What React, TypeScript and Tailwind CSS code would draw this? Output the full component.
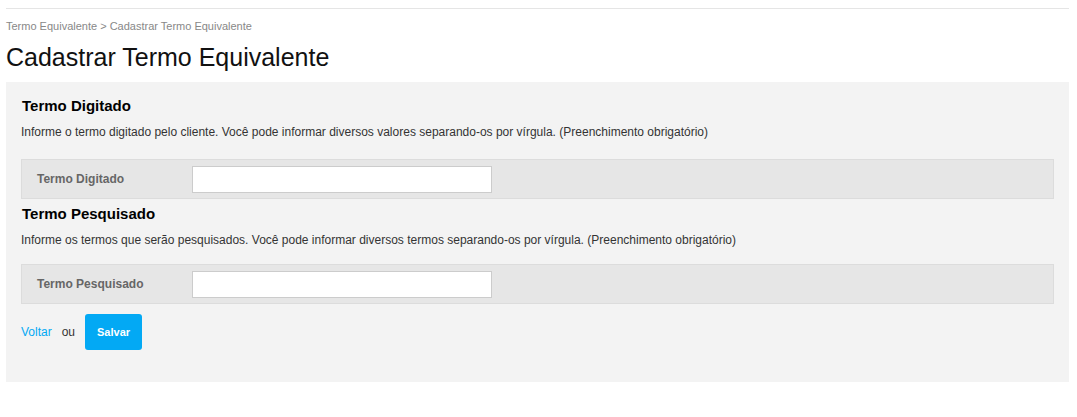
import React from 'react';

function Field({ label }: { label: string }) {
  return (
    <div className="flex items-center h-[40px] bg-[#e6e6e6] border border-[#dcdcdc]">
      <span className="w-[170px] pl-[15px] text-[12px] font-bold text-[#666]">{label}</span>
      <input type="text" className="w-[300px] h-[27px] bg-white border border-[#cccccc] outline-none" />
    </div>
  );
}

export default function App() {
  return (
    <div className="min-h-screen bg-white px-[6px] pt-[8px] font-['Liberation_Sans',Arial,sans-serif] text-[#333]">
      <div className="w-[1063px] border-t border-[#e5e5e5]" />
      <div className="pt-[10px] text-[11px] leading-[14px] text-[#888]">
        Termo Equivalente &gt; Cadastrar Termo Equivalente
      </div>
      <h1 className="mt-[9px] text-[25px] leading-[30px] text-[#111]">Cadastrar Termo Equivalente</h1>

      {/* Formulario */}
      <div className="mt-[10px] w-[1063px] h-[300px] bg-[#f3f3f3] px-[15px] pt-[14px]">
        <h2 className="pl-[1px] text-[15px] leading-[20px] font-bold text-black">Termo Digitado</h2>
        <p className="mt-[8px] text-[12px] leading-[16px] text-[#333]">
          Informe o termo digitado pelo cliente. Você pode informar diversos valores separando-os por vírgula. (Preenchimento obrigatório)
        </p>
        <div className="mt-[19px]">
          <Field label="Termo Digitado" />
        </div>

        <h2 className="mt-[5px] pl-[1px] text-[15px] leading-[20px] font-bold text-black">Termo Pesquisado</h2>
        <p className="mt-[8px] text-[12px] leading-[16px] text-[#333]">
          Informe os termos que serão pesquisados. Você pode informar diversos termos separando-os por vírgula. (Preenchimento obrigatório)
        </p>
        <div className="mt-[16px]">
          <Field label="Termo Pesquisado" />
        </div>

        <div className="mt-[10px] flex items-center text-[12px]">
          <a href="#" className="text-[#03a9f4]">Voltar</a>
          <span className="ml-[10px] text-[#333]">ou</span>
          <button className="ml-[10px] w-[57px] h-[36px] rounded-[3px] bg-[#03a9f4] text-[11px] font-bold text-white">
            Salvar
          </button>
        </div>
      </div>
    </div>
  );
}
